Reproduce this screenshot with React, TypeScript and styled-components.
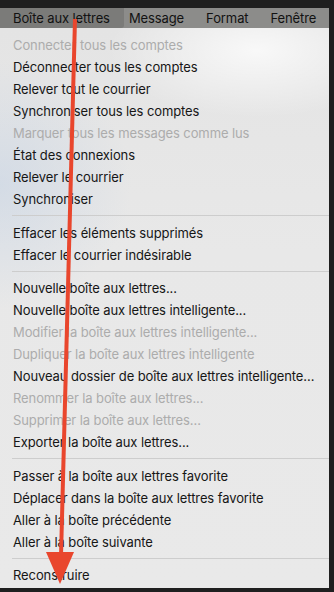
import styled, { createGlobalStyle } from 'styled-components';

const GlobalStyle = createGlobalStyle`
  html, body {
    margin: 0;
    padding: 0;
    background: #1f1f1f;
  }
`;

const Screen = styled.div`
  position: relative;
  width: 334px;
  height: 592px;
  overflow: hidden;
  background: #1f1f1f;
  font-family: Inter, 'Liberation Sans', sans-serif;
  letter-spacing: -0.1px;
  -webkit-font-smoothing: antialiased;
`;

const TopStrip = styled.div`
  height: 8px;
`;

const MenuBar = styled.div`
  display: flex;
  align-items: stretch;
  width: 329px;
  height: 20px;
  background: #8c8c8a;
`;

const MenuTitle = styled.div<{ $active?: boolean }>`
  display: flex;
  align-items: center;
  padding: ${(p) => (p.$active ? '0 14px 0 13px' : '0 11px')};
  margin-right: ${(p) => (p.$active ? '-6px' : '0')};
  font-size: 13px;
  color: #121212;
  background: ${(p) => (p.$active ? '#7b7b79' : 'transparent')};
  border-bottom-right-radius: ${(p) => (p.$active ? '3px' : '0')};
  white-space: nowrap;
`;

const Dropdown = styled.div`
  width: 329px;
  padding: 6px 0 2px;
  background:
    radial-gradient(ellipse 45% 12% at 78% 4%, rgba(255, 255, 255, 0.75), rgba(255, 255, 255, 0) 100%),
    radial-gradient(ellipse 40% 22% at 0% 28%, rgba(196, 210, 228, 0.55), rgba(196, 210, 228, 0) 100%),
    linear-gradient(180deg, #e4e4e4 0%, #e8e8e8 40%, #e9e9e9 100%);
`;

const Item = styled.div<{ $disabled?: boolean }>`
  height: 22px;
  line-height: 22px;
  padding-left: 13px;
  font-size: 13px;
  color: ${(p) => (p.$disabled ? '#acacac' : '#161616')};
  white-space: nowrap;
`;

const Separator = styled.div`
  height: 11.5px;
  display: flex;
  align-items: center;
  padding-left: 12px;

  &::after {
    content: '';
    flex: 1;
    height: 1px;
    background: #cdcdcd;
  }
`;

const ArrowLayer = styled.svg`
  position: absolute;
  top: 0;
  left: 0;
  pointer-events: none;
`;

type Entry = { label: string; disabled?: boolean } | 'sep';

const entries: Entry[] = [
  { label: 'Connecter tous les comptes', disabled: true },
  { label: 'Déconnecter tous les comptes' },
  { label: 'Relever tout le courrier' },
  { label: 'Synchroniser tous les comptes' },
  { label: 'Marquer tous les messages comme lus', disabled: true },
  { label: 'État des connexions' },
  { label: 'Relever le courrier' },
  { label: 'Synchroniser' },
  'sep',
  { label: 'Effacer les éléments supprimés' },
  { label: 'Effacer le courrier indésirable' },
  'sep',
  { label: 'Nouvelle boîte aux lettres...' },
  { label: 'Nouvelle boîte aux lettres intelligente...' },
  { label: 'Modifier la boîte aux lettres intelligente...', disabled: true },
  { label: 'Dupliquer la boîte aux lettres intelligente', disabled: true },
  { label: 'Nouveau dossier de boîte aux lettres intelligente...' },
  { label: 'Renommer la boîte aux lettres...', disabled: true },
  { label: 'Supprimer la boîte aux lettres...', disabled: true },
  { label: 'Exporter la boîte aux lettres...' },
  'sep',
  { label: 'Passer à la boîte aux lettres favorite' },
  { label: 'Déplacer dans la boîte aux lettres favorite' },
  { label: 'Aller à la boîte précédente' },
  { label: 'Aller à la boîte suivante' },
  'sep',
  { label: 'Reconstruire' },
];

export default function App() {
  return (
    <Screen>
      <GlobalStyle />
      <TopStrip />
      <MenuBar>
        <MenuTitle $active>Boîte aux lettres</MenuTitle>
        <MenuTitle>Message</MenuTitle>
        <MenuTitle>Format</MenuTitle>
        <MenuTitle>Fenêtre</MenuTitle>
      </MenuBar>
      <Dropdown>
        {entries.map((e, i) =>
          e === 'sep' ? (
            <Separator key={i} />
          ) : (
            <Item key={i} $disabled={e.disabled}>
              {e.label}
            </Item>
          )
        )}
      </Dropdown>
      <ArrowLayer width="334" height="592" viewBox="0 0 334 592">
        <line x1="75" y1="19" x2="61" y2="556" stroke="#e9462d" strokeWidth="4" />
        <polygon points="46,552 74,552 60,584" fill="#e9462d" />
      </ArrowLayer>
    </Screen>
  );
}
